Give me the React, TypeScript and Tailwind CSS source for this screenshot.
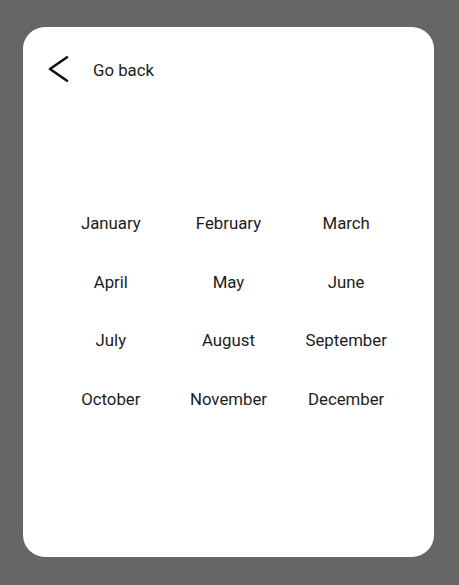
const months = [
  'January',
  'February',
  'March',
  'April',
  'May',
  'June',
  'July',
  'August',
  'September',
  'October',
  'November',
  'December',
];

function BackIcon() {
  return (
    <svg width="22" height="28" viewBox="0 0 22 28" fill="none" className="shrink-0">
      <path
        d="M20 2.3 L3 14 L20 25.7"
        stroke="#111111"
        strokeWidth="2.6"
        strokeLinecap="round"
        strokeLinejoin="round"
      />
    </svg>
  );
}

export default function App() {
  return (
    <div className="w-full h-[585px] bg-[#666666] pt-[27px] pl-[23px] font-['Roboto','Liberation_Sans',sans-serif]">
      <div className="w-[411px] h-[530px] bg-white rounded-[22px] overflow-hidden">
        <div className="flex items-start pl-[24px] pt-[28px]">
          <BackIcon />
          <span className="ml-[24px] mt-[3px] text-[16.8px] leading-6 text-[#1c1c1c]">Go back</span>
        </div>
        <div className="mt-[128px] grid grid-cols-3 gap-y-[34.6px] px-[29px]">
          {months.map((m) => (
            <div key={m} className="text-center text-[16.8px] leading-6 text-[#1c1c1c]">
              {m}
            </div>
          ))}
        </div>
      </div>
    </div>
  );
}
